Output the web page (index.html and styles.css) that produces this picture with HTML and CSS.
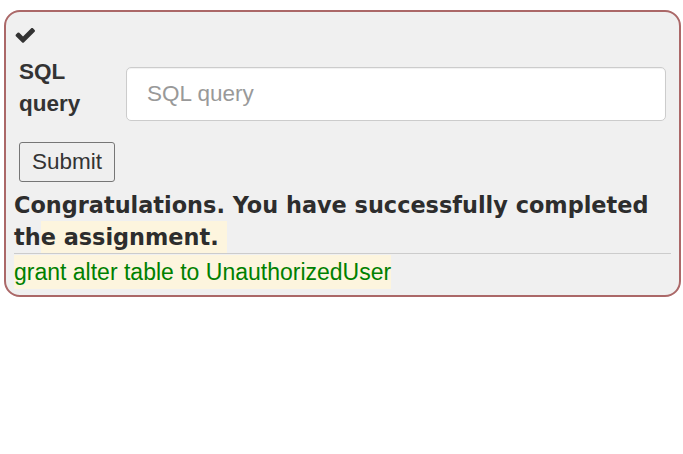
FILE: index.html
```html
<!DOCTYPE html>
<html>
<head>
<meta charset="utf-8">
<link rel="stylesheet" href="styles.css">
</head>
<body>
<div class="panel">
  <div class="check">
    <svg width="20" height="15" viewBox="77 362 1594 1160" aria-hidden="true"><path fill="#333" d="M1671 566q0 40-28 68l-724 724-136 136q-28 28-68 28t-68-28l-136-136-362-362q-28-28-28-68t28-68l136-136q28-28 68-28t68 28l294 295 656-657q28-28 68-28t68 28l136 136q28 28 28 68z"/></svg>
  </div>
  <form class="form">
    <div class="row">
      <label class="label">SQL query</label>
      <input class="input" type="text" placeholder="SQL query">
    </div>
    <button class="btn" type="button">Submit</button>
  </form>
  <div class="feedback">Congratulations. You have successfully completed th<span class="hl">e assignment.</span></div>
  <div class="rule"></div>
  <div class="output"><span class="out-text">grant alter table to UnauthorizedUser</span></div>
</div>
</body>
</html>
```

FILE: styles.css
```css
html, body {
  margin: 0;
  padding: 0;
  background: #ffffff;
}
body {
  font-family: "Liberation Sans", Arial, sans-serif;
  font-size: 22.5px;
  color: #333;
}
.panel {
  margin: 10px 2px 0 4px;
  border: 2px solid #ab6868;
  border-radius: 16px;
  background: #f0f0f0;
  padding: 16px 8px 6px 8px;
  display: flex;
  flex-direction: column;
}
.check {
  height: 14px;
  padding-left: 1px;
  display: flex;
  align-items: flex-start;
}
.check svg {
  display: block;
}
.form {
  padding-left: 5px;
  margin: 14px 0 0 0;
  display: flex;
  flex-direction: column;
  align-items: flex-start;
}
.row {
  display: flex;
  align-items: flex-start;
}
.label {
  width: 107px;
  font-weight: bold;
  line-height: 32px;
}
.input {
  margin-top: 11px;
  width: 540px;
  height: 54px;
  box-sizing: border-box;
  border: 1px solid #cccccc;
  border-radius: 5px;
  background: #fff;
  padding: 0 20px;
  font-family: "Liberation Sans", Arial, sans-serif;
  font-size: 22.5px;
  color: #555;
  box-shadow: inset 0 1px 1px rgba(0,0,0,0.06);
}
.input::placeholder {
  color: #999;
}
.btn {
  margin-top: 21px;
  height: 40px;
  width: 96px;
  box-sizing: border-box;
  border: 1px solid #767676;
  border-radius: 3px;
  background: #efefef;
  font-family: "Liberation Sans", Arial, sans-serif;
  font-size: 22.5px;
  color: #333;
  padding: 0;
}
.feedback {
  margin-top: 7px;
  font-family: "DejaVu Sans", "Liberation Sans", sans-serif;
  font-weight: bold;
  font-size: 22.4px;
  line-height: 32px;
  color: #2d2d2d;
}
.hl {
  display: inline-block;
  background: #fdf5de;
  padding-right: 8px;
  line-height: 32px;
  vertical-align: top;
}
.rule {
  height: 1px;
  background: #cccccc;
}
.output {
  margin-top: 1px;
  color: #008000;
  font-size: 23px;
}
.out-text {
  display: inline-block;
  background: #fdf5de;
  line-height: 34px;
}
```
